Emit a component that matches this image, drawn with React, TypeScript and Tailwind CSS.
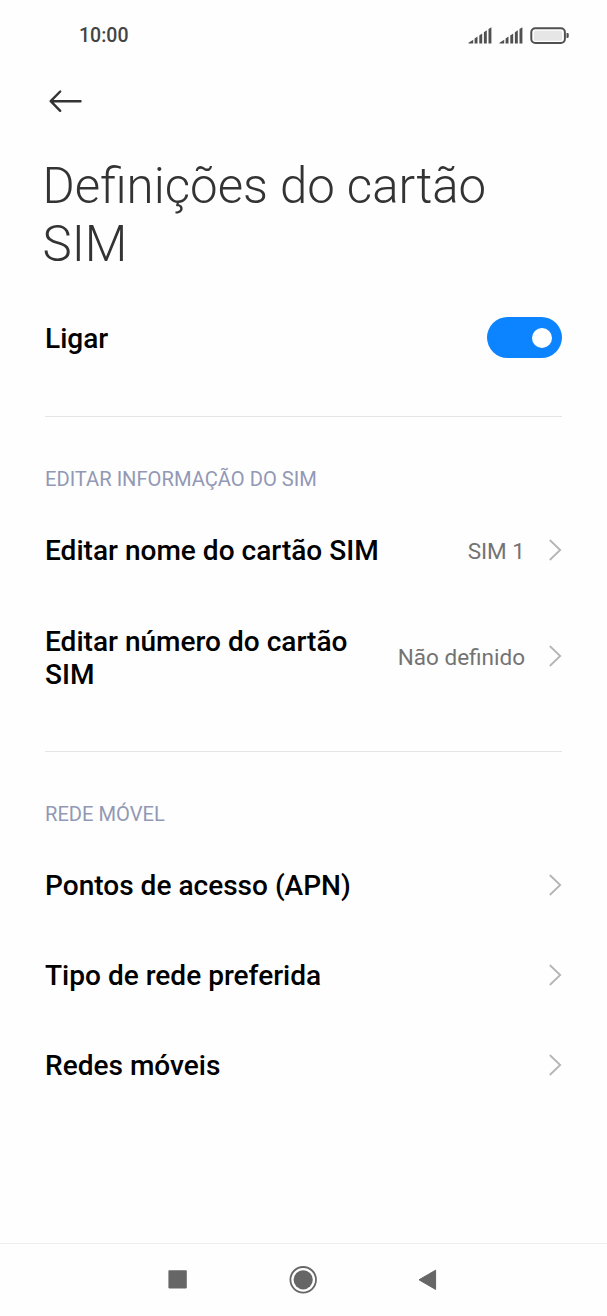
const rowText = 'text-[28.05px] leading-[33px] font-medium text-black'

function Chevron() {
    return (
        <svg className="shrink-0" width="14" height="22" viewBox="0 0 14 22" fill="none">
            <path d="M2.3 1.5L12.2 11L2.3 20.5" stroke="#b4b4b4" strokeWidth="1.8" strokeLinecap="round" />
        </svg>
    )
}

// five bars cut off along one rising slope
function Signal() {
    return (
        <svg width="24" height="17" viewBox="0 0 24 17" fill="#505050">
            <path d="M0.5 16.5V15.8L5.2 12.8V16.5Z" />
            <path d="M6.6 11.5L9.5 9.6V16.5H6.6Z" />
            <path d="M11.3 8.4L14.2 6.4V16.5H11.3Z" />
            <path d="M15.9 5.2L18.8 3.2V16.5H15.9Z" />
            <path d="M20.5 2L23.4 0.2V16.5H20.5Z" />
        </svg>
    )
}

function Battery() {
    return (
        <svg width="39" height="17" viewBox="0 0 39 17">
            <rect x="1.3" y="1.2" width="33.6" height="14.8" rx="4" fill="none" stroke="#505050" strokeWidth="2" />
            <rect x="4" y="3.7" width="28" height="10" rx="1.5" fill="#e6e6e6" />
            <path d="M36.5 6H37.5Q38.7 6 38.7 7.2V9.8Q38.7 11 37.5 11H36.5Z" fill="#505050" />
        </svg>
    )
}

function Row(props: { label: string, value?: string, tall?: boolean }) {
    const { label, value, tall } = props

    return (
        <div className={`flex items-center justify-between ${tall ? 'h-[122px]' : 'h-[90px]'}`}>
            <span className={`max-w-[340px] ${tall ? 'pt-1' : ''} ${rowText}`}>{label}</span>
            <div className="flex items-center gap-[23px]">
                {value && <span className="pt-1 text-[22.5px] text-[#737373]">{value}</span>}
                <Chevron />
            </div>
        </div>
    )
}

export default function App() {
    return (
        <div className="flex h-[1316px] w-[607px] flex-col bg-[#fefefe] font-[Roboto,sans-serif]">
            <header className="flex h-[70px] items-center justify-between pr-[38px] pl-[79px]">
                <span className="pt-0.5 text-[19.5px] font-medium text-[#444]">10:00</span>
                <div className="flex items-center gap-[7px]">
                    <Signal />
                    <Signal />
                    <Battery />
                </div>
            </header>

            <main className="flex flex-1 flex-col px-[45px]">
                <div className="flex h-[62px] items-center">
                    <svg className="ml-1" width="34" height="24" viewBox="0 0 34 24" fill="none" stroke="#333" strokeWidth="2.4" strokeLinecap="round" strokeLinejoin="round">
                        <path d="M11.2 2.5L1.7 12.2L11.2 21.8M1.7 12.2H31.5" />
                    </svg>
                </div>
                <h1 className="mt-[25px] -ml-[2.5px] text-[49.2px] leading-[58px] font-light text-[#333]">Definições do cartão SIM</h1>
                <div className="mt-5 flex h-[90px] items-center justify-between">
                    <span className={rowText}>Ligar</span>
                    <div className="mb-px flex h-[41px] w-[75px] items-center justify-end rounded-full bg-[#0d84ff] pr-[10.5px]">
                        <span className="size-5 rounded-full bg-white" />
                    </div>
                </div>
                <hr className="mt-[33px] border-[#e5e5e5]" />
                <h2 className="mt-[46px] text-[20.15px] leading-[33px] text-[#9298b5]">EDITAR INFORMAÇÃO DO SIM</h2>
                <div className="mt-[9px]">
                    <Row label="Editar nome do cartão SIM" value="SIM 1" />
                    <Row label="Editar número do cartão SIM" value="Não definido" tall />
                </div>
                <hr className="mt-[34px] border-[#e5e5e5]" />
                <h2 className="mt-[46px] text-[20.15px] leading-[33px] text-[#9298b5]">REDE MÓVEL</h2>
                <div className="mt-[9px]">
                    <Row label="Pontos de acesso (APN)" />
                    <Row label="Tipo de rede preferida" />
                    <Row label="Redes móveis" />
                </div>
            </main>

            <nav className="flex h-[73px] border-t border-[#eee] pt-[22px] pl-[168px]">
                <svg width="270" height="28" viewBox="0 0 270 28" fill="#666">
                    <rect x="0.4" y="4.2" width="18.4" height="18.2" rx="0.8" />
                    <circle cx="135.2" cy="13.8" r="9.6" />
                    <circle cx="135.2" cy="13.8" r="12.8" fill="none" stroke="#666" strokeWidth="1.8" />
                    <path d="M251 13.8L267.6 4.2V23.4Z" stroke="#666" strokeWidth="1" strokeLinejoin="round" />
                </svg>
            </nav>
        </div>
    )
}
